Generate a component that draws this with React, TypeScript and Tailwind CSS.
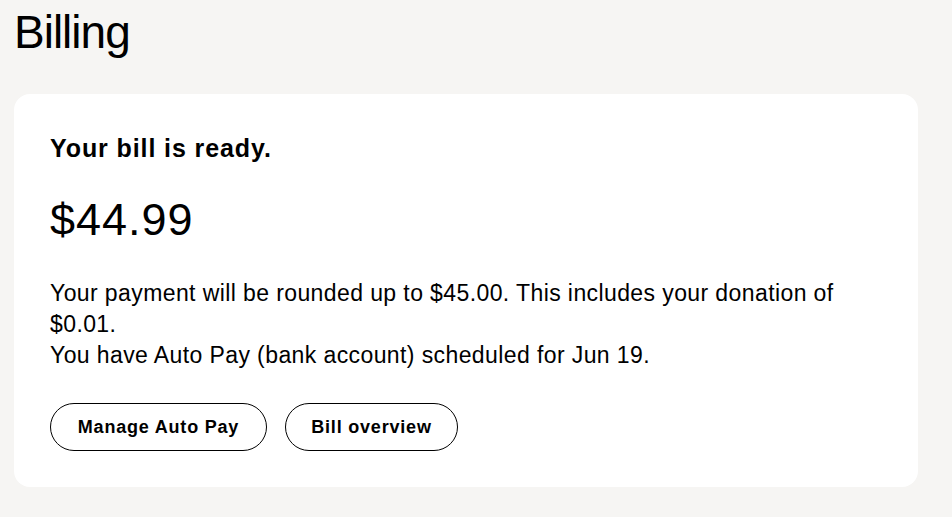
export default function App() {
  return (
    <main
      className="min-h-screen bg-[#f6f5f3] px-[14px] pt-[9px] text-black"
      style={{ fontFamily: '"Liberation Sans", Arial, Helvetica, sans-serif' }}
    >
      <h1 className="text-[46px] leading-none font-normal tracking-[-1px]">Billing</h1>

      <section className="mt-[39px] w-[904px] rounded-[16px] bg-white px-[36px] pt-[39px] pb-[36px]">
        <h2 className="text-[25px] leading-[30px] font-bold tracking-[0.9px]">Your bill is ready.</h2>

        <p className="mt-[34px] text-[45px] leading-none tracking-[1px]">$44.99</p>

        <div className="mt-[36px] text-[23px] leading-[31px] tracking-[0.4px]">
          <p>Your payment will be rounded up to $45.00. This includes your donation of $0.01.</p>
          <p>You have Auto Pay (bank account) scheduled for Jun 19.</p>
        </div>

        <div className="mt-[32px] flex gap-[18px]">
          <button className="h-[48px] w-[217px] rounded-full border border-black text-[18px] font-bold tracking-[0.8px]">
            Manage Auto Pay
          </button>
          <button className="h-[48px] w-[173px] rounded-full border border-black text-[18px] font-bold tracking-[0.8px]">
            Bill overview
          </button>
        </div>
      </section>
    </main>
  );
}
